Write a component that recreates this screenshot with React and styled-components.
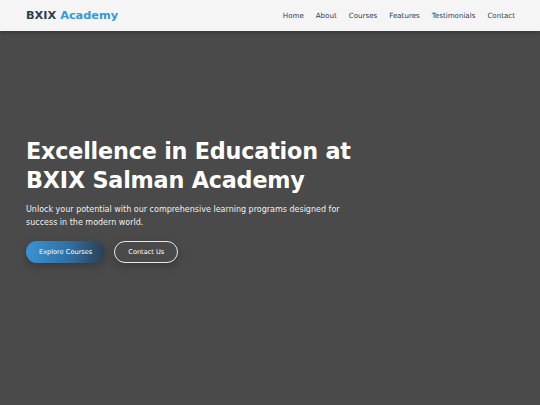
import React from 'react';
import styled, { createGlobalStyle } from 'styled-components';

const Global = createGlobalStyle`
  html, body { margin: 0; padding: 0; }
  body { font-family: 'DejaVu Sans', 'Noto Sans', sans-serif; background: #4a4a4a; }
  * { box-sizing: border-box; }
`;

const Page = styled.div`
  width: 540px;
  height: 405px;
  display: flex;
  flex-direction: column;
  overflow: hidden;
`;

const Navbar = styled.header`
  height: 31px;
  flex-shrink: 0;
  background: #f5f5f5;
  display: flex;
  align-items: center;
  justify-content: space-between;
  padding: 0 25px 0 26px;
  box-shadow: 0 1px 4px rgba(0, 0, 0, 0.35);
  position: relative;
  z-index: 2;
`;

const Logo = styled.div`
  font-family: 'DejaVu Sans', sans-serif;
  font-weight: 700;
  font-size: 11.3px;
  color: #2c3e50;
`;

const LogoAccent = styled.span`
  color: #3498db;
`;

const NavList = styled.nav`
  display: flex;
  gap: 12px;
`;

const NavLink = styled.a`
  font-family: 'DejaVu Sans', sans-serif;
  font-size: 7.1px;
  color: #2c3e50;
  text-decoration: none;
`;

const Hero = styled.section`
  flex: 1;
  background: #4a4a4a;
  padding: 106px 26px 0;
  color: #ffffff;
`;

const Title = styled.h1`
  margin: 0;
  font-family: 'DejaVu Sans', sans-serif;
  font-weight: 700;
  font-size: 22.3px;
  line-height: 29px;
  letter-spacing: -0.2px;
`;

const Lead = styled.p`
  margin: 9px 0 0;
  font-family: 'DejaVu Sans', sans-serif;
  font-size: 8px;
  line-height: 12.5px;
  width: 345px;
  color: #f0f0f0;
`;

const Actions = styled.div`
  display: flex;
  gap: 9px;
  margin-top: 12px;
`;

const Button = styled.a`
  height: 22px;
  padding: 0 13px;
  border-radius: 11px;
  display: inline-flex;
  align-items: center;
  font-family: 'DejaVu Sans', sans-serif;
  font-size: 6.6px;
  color: #fff;
  background: ${p => (p.$primary ? 'linear-gradient(90deg, #3a93d4 0%, #2f6fa3 55%, #2c3e50 100%)' : 'transparent')};
  border: ${p => (p.$primary ? 'none' : '1px solid #e8e8e8')};
  box-shadow: 0 3px 8px rgba(0, 0, 0, 0.25);
`;

const links = ['Home', 'About', 'Courses', 'Features', 'Testimonials', 'Contact'];

export default function App() {
  return (
    <Page>
      <Global />
      <Navbar>
        <Logo>BXIX <LogoAccent>Academy</LogoAccent></Logo>
        <NavList>
          {links.map(l => <NavLink key={l}>{l}</NavLink>)}
        </NavList>
      </Navbar>
      <Hero>
        <Title>Excellence in Education at<br />BXIX Salman Academy</Title>
        <Lead>Unlock your potential with our comprehensive learning programs designed for success in the modern world.</Lead>
        <Actions>
          <Button $primary>Explore Courses</Button>
          <Button>Contact Us</Button>
        </Actions>
      </Hero>
    </Page>
  );
}
